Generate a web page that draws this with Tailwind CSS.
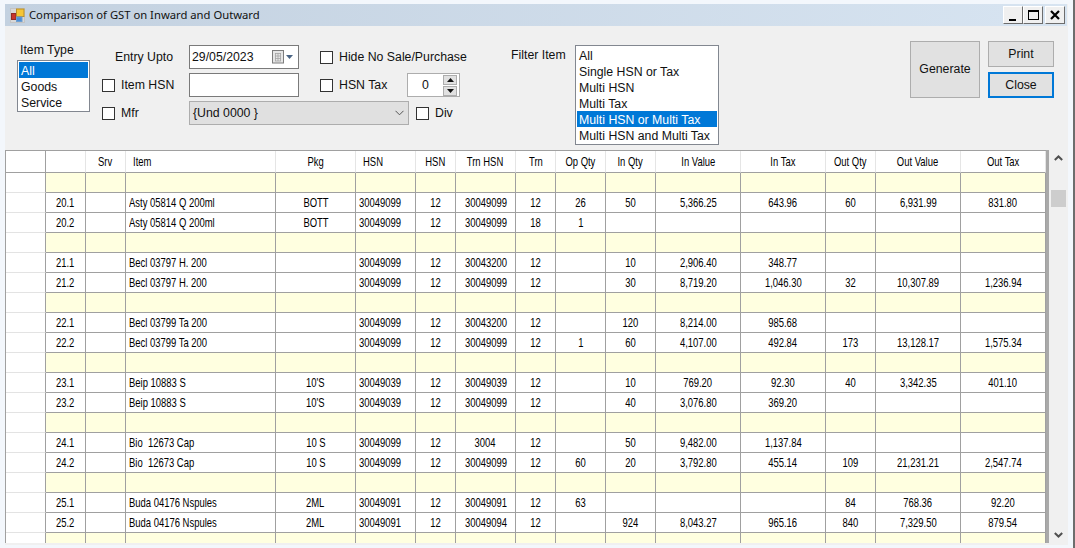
<!DOCTYPE html>
<html>
<head>
<meta charset="utf-8">
<script src="https://cdn.jsdelivr.net/npm/@tailwindcss/browser@4"></script>
</head>
<body class="bg-[#f3f7fc] overflow-hidden">
<div class="w-[1075px] h-[548px] relative pt-[4px] pl-[5px] font-['Liberation_Sans',Arial,sans-serif] text-[12.3px] text-[#111] whitespace-nowrap border-r-2 border-[#6d6d6d]">
  <div class="w-[1063px] h-[541px] bg-[#f0f0f0] flex flex-col">
    <!-- title bar -->
    <div class="h-[22px] w-[1062px] flex items-center bg-gradient-to-r from-[#c3d1e0] to-[#d7e4f1] shrink-0">
      <svg class="ml-[5px] w-[15px] h-[15px] shrink-0" viewBox="0 0 15 15">
        <rect x="0.5" y="0.5" width="14" height="14" fill="#d8d8d8" stroke="#c4c4c4"/>
        <rect x="1.5" y="5.5" width="4.5" height="6" fill="#c8342c" stroke="#8f2b26"/>
        <rect x="6.5" y="1" width="7.5" height="7.5" fill="#f5c535" stroke="#b98f2a"/>
        <rect x="6.5" y="9" width="5.5" height="4.5" fill="#4d8fd8" stroke="#6f9fd0"/>
      </svg>
      <span class="ml-[4px] font-['Noto_Sans',sans-serif] text-[11.25px] leading-none text-[#111]">Comparison of GST on Inward and Outward</span>
      <div class="ml-auto mr-[2px] flex">
        <div class="w-[20px] h-[18px] bg-[#f0f0f0] border border-white border-r-[#6d6d6d] border-b-[#6d6d6d] flex items-end justify-center pb-[2px]"><div class="w-[7px] h-[2px] bg-black"></div></div>
        <div class="w-[20px] h-[18px] ml-[0.5px] bg-[#f0f0f0] border border-white border-r-[#6d6d6d] border-b-[#6d6d6d] flex items-center justify-center"><div class="w-[11px] h-[10px] border border-black border-t-2"></div></div>
        <div class="w-[20px] h-[18px] ml-[2px] bg-[#f0f0f0] border border-white border-r-[#6d6d6d] border-b-[#6d6d6d] flex items-center justify-center"><svg class="w-[10px] h-[10px]" viewBox="0 0 10 10"><path d="M1 1 9 9M9 1 1 9" stroke="#000" stroke-width="2.2"/></svg></div>
      </div>
    </div>

    <!-- form -->
    <div class="h-[124px] shrink-0 flex pt-[15px] pl-[12px] pr-[14px]">
      <div class="w-[73px] shrink-0">
        <div class="mt-[1px] h-[16px] leading-[16px] pl-[3px]">Item Type</div>
        <div class="mt-[2px] h-[52px] border border-[#828790] bg-white pt-[1px] px-[1px] leading-[18px]">
          <div class="h-[16px] bg-[#0078d7] text-white pl-[2px]">All</div>
          <div class="h-[16px] pl-[2px]">Goods</div>
          <div class="h-[16px] pl-[2px]">Service</div>
        </div>
      </div>

      <div class="ml-[12px] w-[360px] shrink-0 pt-[2px]">
        <div class="h-[28px] flex items-center">
          <div class="w-[87px] shrink-0 pl-[13px]">Entry Upto</div>
          <div class="w-[110px] shrink-0 h-[24px] border border-[#7a7a7a] bg-white flex items-center pl-[2px]">
            <span>29/05/2023</span>
            <svg class="ml-auto mr-[5px] w-[21px] h-[14px]" viewBox="0 0 21 14">
              <rect x="0.5" y="0.5" width="11" height="12.5" fill="#e6e6e6" stroke="#7d7d7d"/>
              <path d="M3 3.5h6M3 6h6M3 8.5h6M3 11h6M3.5 3v8M6 3v8M8.5 3v8" stroke="#a5a5a5" stroke-width="0.8"/>
              <path d="M14 5h7l-3.5 4z" fill="#4a6484"/>
            </svg>
          </div>
          <div class="ml-[21px] w-[13px] h-[13px] shrink-0 border border-[#333] bg-white"></div>
          <span class="ml-[6px]">Hide No Sale/Purchase</span>
        </div>
        <div class="h-[28px] flex items-center">
          <div class="w-[87px] shrink-0 flex items-center">
            <div class="w-[13px] h-[13px] border border-[#333] bg-white"></div>
            <span class="ml-[6px]">Item HSN</span>
          </div>
          <div class="w-[110px] shrink-0 h-[24px] border border-[#7a7a7a] bg-white"></div>
          <div class="ml-[21px] w-[87px] shrink-0 flex items-center">
            <div class="w-[13px] h-[13px] border border-[#333] bg-white"></div>
            <span class="ml-[6px]">HSN Tax</span>
          </div>
          <div class="w-[53px] shrink-0 h-[24px] border border-[#adadad] bg-white flex items-center">
            <span class="w-[35px] text-center">0</span>
            <div class="flex flex-col gap-[1px]">
              <div class="w-[14px] h-[10px] bg-[#e1e1e1] border border-[#adadad] flex items-center justify-center"><svg class="w-[7px] h-[4px]" viewBox="0 0 7 4"><path d="M3.5 0 7 4H0z" fill="#111"/></svg></div>
              <div class="w-[14px] h-[10px] bg-[#e1e1e1] border border-[#adadad] flex items-center justify-center"><svg class="w-[7px] h-[4px]" viewBox="0 0 7 4"><path d="M0 0h7L3.5 4z" fill="#111"/></svg></div>
            </div>
          </div>
        </div>
        <div class="h-[28px] flex items-center">
          <div class="w-[87px] shrink-0 flex items-center">
            <div class="w-[13px] h-[13px] border border-[#333] bg-white"></div>
            <span class="ml-[6px]">Mfr</span>
          </div>
          <div class="w-[220px] shrink-0 h-[24px] border border-[#adadad] bg-[#e0e0e0] flex items-center pl-[3px]">
            <span>{Und 0000 }</span>
            <svg class="ml-auto mr-[4px] w-[9px] h-[6px]" viewBox="0 0 9 6"><path d="M.5.8 4.5 4.8 8.5.8" fill="none" stroke="#555" stroke-width="1"/></svg>
          </div>
          <div class="ml-[7px] w-[13px] h-[13px] shrink-0 border border-[#333] bg-white"></div>
          <span class="ml-[6px]">Div</span>
        </div>
      </div>

      <div class="ml-[49px] flex shrink-0">
        <div class="w-[64px] mt-[6px] h-[16px] leading-[16px]">Filter Item</div>
        <div class="w-[144px] h-[100px] mt-[4px] border border-[#828790] bg-white pt-[1px] px-[1px] leading-[18px]">
          <div class="h-[16px] pl-[2px]">All</div>
          <div class="h-[16px] pl-[2px]">Single HSN or Tax</div>
          <div class="h-[16px] pl-[2px]">Multi HSN</div>
          <div class="h-[16px] pl-[2px]">Multi Tax</div>
          <div class="h-[16px] pl-[2px] bg-[#0078d7] text-white">Multi HSN or Multi Tax</div>
          <div class="h-[16px] pl-[2px]">Multi HSN and Multi Tax</div>
        </div>
      </div>

      <div class="ml-auto flex gap-[8px] shrink-0">
        <div class="w-[70px] h-[57px] border border-[#adadad] bg-[#e1e1e1] flex items-center justify-center">Generate</div>
        <div class="flex flex-col gap-[5px]">
          <div class="w-[66px] h-[26px] border border-[#adadad] bg-[#e1e1e1] flex items-center justify-center">Print</div>
          <div class="w-[66px] h-[26px] border-2 border-[#0078d7] bg-[#e1e1e1] flex items-center justify-center">Close</div>
        </div>
      </div>
    </div>

    <!-- grid -->
    <div class="h-[393px] flex shrink-0">
      <div class="w-[1041px] h-[393px] border-l border-t border-[#a0a0a0] overflow-hidden shrink-0">
        <table class="table-fixed w-[1040px] border-separate border-spacing-0 text-[13.5px] text-black leading-[19px] [&_td]:h-5 [&_td]:p-0 [&_td]:border-r [&_td]:border-b [&_td]:border-[#a0a0a0] [&_td]:text-center [&_td:first-child]:bg-white [&_td:first-child]:border-b-[#e3e3e3] [&_th]:h-[22px] [&_th]:p-0 [&_th]:font-normal [&_th]:bg-white [&_th]:border-r [&_th]:border-b [&_th]:border-r-[#e5e5e5] [&_th]:border-b-[#a0a0a0] [&_th:first-child]:border-r-[#a0a0a0] [&_span]:inline-block [&_span]:whitespace-nowrap [&_span]:scale-x-[.7] [&_td:nth-child(4)]:text-left [&_td:nth-child(4)]:pl-[3px] [&_th:nth-child(4)]:text-left [&_th:nth-child(4)]:pl-[7px] [&_td:nth-child(4)>span]:origin-left [&_th:nth-child(4)>span]:origin-left [&_td:nth-child(6)]:text-left [&_td:nth-child(6)]:pl-[3px] [&_th:nth-child(6)]:text-left [&_th:nth-child(6)]:pl-[7px] [&_td:nth-child(6)>span]:origin-left [&_th:nth-child(6)>span]:origin-left">
          <colgroup>
            <col class="w-[40px]"><col class="w-[40px]"><col class="w-[40px]"><col class="w-[150px]"><col class="w-[80px]"><col class="w-[60px]"><col class="w-[40px]"><col class="w-[60px]"><col class="w-[40px]"><col class="w-[50px]"><col class="w-[50px]"><col class="w-[85px]"><col class="w-[85px]"><col class="w-[50px]"><col class="w-[85px]"><col class="w-[85px]">
          </colgroup>
          <tr><th></th><th></th><th><span>Srv</span></th><th><span>Item</span></th><th><span>Pkg</span></th><th><span>HSN</span></th><th><span>HSN</span></th><th><span>Trn HSN</span></th><th><span>Trn</span></th><th><span>Op Qty</span></th><th><span>In Qty</span></th><th><span>In Value</span></th><th><span>In Tax</span></th><th><span>Out Qty</span></th><th><span>Out Value</span></th><th><span>Out Tax</span></th></tr>
          <tr class="bg-[#ffffe0]"><td></td><td></td><td></td><td></td><td></td><td></td><td></td><td></td><td></td><td></td><td></td><td></td><td></td><td></td><td></td><td></td></tr>
          <tr class="bg-white"><td></td><td><span>20.1</span></td><td></td><td><span>Asty 05814 Q 200ml</span></td><td><span>BOTT</span></td><td><span>30049099</span></td><td><span>12</span></td><td><span>30049099</span></td><td><span>12</span></td><td><span>26</span></td><td><span>50</span></td><td><span>5,366.25</span></td><td><span>643.96</span></td><td><span>60</span></td><td><span>6,931.99</span></td><td><span>831.80</span></td></tr>
          <tr class="bg-white"><td></td><td><span>20.2</span></td><td></td><td><span>Asty 05814 Q 200ml</span></td><td><span>BOTT</span></td><td><span>30049099</span></td><td><span>12</span></td><td><span>30049099</span></td><td><span>18</span></td><td><span>1</span></td><td></td><td></td><td></td><td></td><td></td><td></td></tr>
          <tr class="bg-[#ffffe0]"><td></td><td></td><td></td><td></td><td></td><td></td><td></td><td></td><td></td><td></td><td></td><td></td><td></td><td></td><td></td><td></td></tr>
          <tr class="bg-white"><td></td><td><span>21.1</span></td><td></td><td><span>Becl 03797 H. 200</span></td><td></td><td><span>30049099</span></td><td><span>12</span></td><td><span>30043200</span></td><td><span>12</span></td><td></td><td><span>10</span></td><td><span>2,906.40</span></td><td><span>348.77</span></td><td></td><td></td><td></td></tr>
          <tr class="bg-white"><td></td><td><span>21.2</span></td><td></td><td><span>Becl 03797 H. 200</span></td><td></td><td><span>30049099</span></td><td><span>12</span></td><td><span>30049099</span></td><td><span>12</span></td><td></td><td><span>30</span></td><td><span>8,719.20</span></td><td><span>1,046.30</span></td><td><span>32</span></td><td><span>10,307.89</span></td><td><span>1,236.94</span></td></tr>
          <tr class="bg-[#ffffe0]"><td></td><td></td><td></td><td></td><td></td><td></td><td></td><td></td><td></td><td></td><td></td><td></td><td></td><td></td><td></td><td></td></tr>
          <tr class="bg-white"><td></td><td><span>22.1</span></td><td></td><td><span>Becl 03799 Ta 200</span></td><td></td><td><span>30049099</span></td><td><span>12</span></td><td><span>30043200</span></td><td><span>12</span></td><td></td><td><span>120</span></td><td><span>8,214.00</span></td><td><span>985.68</span></td><td></td><td></td><td></td></tr>
          <tr class="bg-white"><td></td><td><span>22.2</span></td><td></td><td><span>Becl 03799 Ta 200</span></td><td></td><td><span>30049099</span></td><td><span>12</span></td><td><span>30049099</span></td><td><span>12</span></td><td><span>1</span></td><td><span>60</span></td><td><span>4,107.00</span></td><td><span>492.84</span></td><td><span>173</span></td><td><span>13,128.17</span></td><td><span>1,575.34</span></td></tr>
          <tr class="bg-[#ffffe0]"><td></td><td></td><td></td><td></td><td></td><td></td><td></td><td></td><td></td><td></td><td></td><td></td><td></td><td></td><td></td><td></td></tr>
          <tr class="bg-white"><td></td><td><span>23.1</span></td><td></td><td><span>Beip 10883 S</span></td><td><span>10'S</span></td><td><span>30049039</span></td><td><span>12</span></td><td><span>30049039</span></td><td><span>12</span></td><td></td><td><span>10</span></td><td><span>769.20</span></td><td><span>92.30</span></td><td><span>40</span></td><td><span>3,342.35</span></td><td><span>401.10</span></td></tr>
          <tr class="bg-white"><td></td><td><span>23.2</span></td><td></td><td><span>Beip 10883 S</span></td><td><span>10'S</span></td><td><span>30049039</span></td><td><span>12</span></td><td><span>30049099</span></td><td><span>12</span></td><td></td><td><span>40</span></td><td><span>3,076.80</span></td><td><span>369.20</span></td><td></td><td></td><td></td></tr>
          <tr class="bg-[#ffffe0]"><td></td><td></td><td></td><td></td><td></td><td></td><td></td><td></td><td></td><td></td><td></td><td></td><td></td><td></td><td></td><td></td></tr>
          <tr class="bg-white"><td></td><td><span>24.1</span></td><td></td><td><span>Bio&nbsp; 12673 Cap</span></td><td><span>10 S</span></td><td><span>30049099</span></td><td><span>12</span></td><td><span>3004</span></td><td><span>12</span></td><td></td><td><span>50</span></td><td><span>9,482.00</span></td><td><span>1,137.84</span></td><td></td><td></td><td></td></tr>
          <tr class="bg-white"><td></td><td><span>24.2</span></td><td></td><td><span>Bio&nbsp; 12673 Cap</span></td><td><span>10 S</span></td><td><span>30049099</span></td><td><span>12</span></td><td><span>30049099</span></td><td><span>12</span></td><td><span>60</span></td><td><span>20</span></td><td><span>3,792.80</span></td><td><span>455.14</span></td><td><span>109</span></td><td><span>21,231.21</span></td><td><span>2,547.74</span></td></tr>
          <tr class="bg-[#ffffe0]"><td></td><td></td><td></td><td></td><td></td><td></td><td></td><td></td><td></td><td></td><td></td><td></td><td></td><td></td><td></td><td></td></tr>
          <tr class="bg-white"><td></td><td><span>25.1</span></td><td></td><td><span>Buda 04176 Nspules</span></td><td><span>2ML</span></td><td><span>30049091</span></td><td><span>12</span></td><td><span>30049091</span></td><td><span>12</span></td><td><span>63</span></td><td></td><td></td><td></td><td><span>84</span></td><td><span>768.36</span></td><td><span>92.20</span></td></tr>
          <tr class="bg-white"><td></td><td><span>25.2</span></td><td></td><td><span>Buda 04176 Nspules</span></td><td><span>2ML</span></td><td><span>30049091</span></td><td><span>12</span></td><td><span>30049094</span></td><td><span>12</span></td><td></td><td><span>924</span></td><td><span>8,043.27</span></td><td><span>965.16</span></td><td><span>840</span></td><td><span>7,329.50</span></td><td><span>879.54</span></td></tr>
          <tr class="bg-[#ffffe0]"><td></td><td></td><td></td><td></td><td></td><td></td><td></td><td></td><td></td><td></td><td></td><td></td><td></td><td></td><td></td><td></td></tr>
        </table>
      </div>
      <div class="w-[3px] h-[393px] bg-[#a9a9a9] shrink-0"></div>
      <div class="w-[19px] h-[393px] flex flex-col items-center relative">
        <svg class="mt-[5px] w-[9px] h-[6px]" viewBox="0 0 9 6"><path d="M.8 5 4.5 1.5 8.2 5" fill="none" stroke="#505050" stroke-width="2"/></svg>
        <div class="mt-[29px] w-[15px] h-[17px] bg-[#cdcdcd]"></div>
        <svg class="mt-auto mb-[5px] w-[9px] h-[6px]" viewBox="0 0 9 6"><path d="M.8 1 4.5 4.5 8.2 1" fill="none" stroke="#505050" stroke-width="2"/></svg>
      </div>
    </div>
  </div>
</div>
</body>
</html>
